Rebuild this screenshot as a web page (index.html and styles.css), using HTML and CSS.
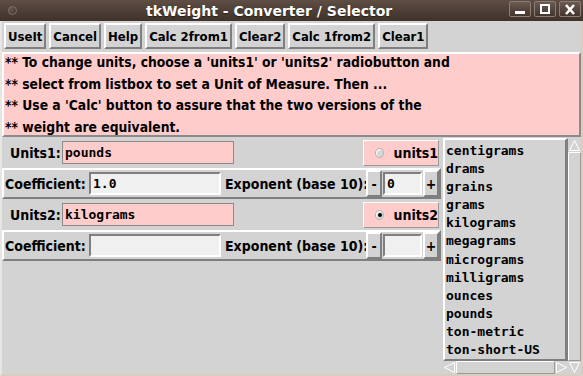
FILE: index.html
```html
<!doctype html>
<html lang="en">
<head>
	<meta charset="utf-8">
	<title>tkWeight - Converter / Selector</title>
	<link rel="stylesheet" href="styles.css">
</head>
<body>
	<div class="window">
		<div class="titlebar">
			<span class="knob"></span>
			<span class="title">tkWeight - Converter / Selector</span>
			<span class="wm">
				<span class="wmbtn"><svg width="14" height="11" viewBox="0 0 14 11"><rect x="2" y="7" width="10" height="3" fill="#fff"/></svg></span>
				<span class="wmbtn"><svg width="14" height="11" viewBox="0 0 14 11"><rect x="3" y="1" width="8" height="8" fill="none" stroke="#fff" stroke-width="2"/></svg></span>
				<span class="wmbtn"><svg width="14" height="11" viewBox="0 0 14 11"><path d="M3 1 L11 10 M11 1 L3 10" stroke="#fff" stroke-width="2.6"/></svg></span>
			</span>
		</div>

		<div class="body">
			<div class="toolbar">
				<button class="tkbtn">UseIt</button>
				<button class="tkbtn">Cancel</button>
				<button class="tkbtn">Help</button>
				<button class="tkbtn">Calc 2from1</button>
				<button class="tkbtn">Clear2</button>
				<button class="tkbtn">Calc 1from2</button>
				<button class="tkbtn">Clear1</button>
			</div>

			<div class="msg">
				<p>** To change units, choose a 'units1' or 'units2' radiobutton and</p>
				<p>** select from listbox to set a Unit of Measure. Then ...</p>
				<p>** Use a 'Calc' button to assure that the two versions of the</p>
				<p>** weight are equivalent.</p>
			</div>

			<div class="main">
				<div class="fields">
					<div class="row units">
						<span class="lbl ulbl">Units1:</span>
						<span class="entry pink">pounds</span>
						<span class="spacer"></span>
						<span class="radio"><span class="dot"></span>units1</span>
					</div>
					<div class="row coef">
						<span class="lbl clbl">Coefficient:</span>
						<span class="entry grey coefval">1.0</span>
						<span class="lbl elbl">Exponent (base 10):</span>
						<span class="small">-</span>
						<span class="entry grey expval">0</span>
						<span class="small">+</span>
					</div>
					<div class="row units">
						<span class="lbl ulbl">Units2:</span>
						<span class="entry pink">kilograms</span>
						<span class="spacer"></span>
						<span class="radio"><span class="dot on"></span>units2</span>
					</div>
					<div class="row coef">
						<span class="lbl clbl">Coefficient:</span>
						<span class="entry grey coefval"></span>
						<span class="lbl elbl">Exponent (base 10):</span>
						<span class="small">-</span>
						<span class="entry grey expval"></span>
						<span class="small">+</span>
					</div>
				</div>

				<div class="listarea">
					<ul class="listbox">
						<li>centigrams</li>
						<li>drams</li>
						<li>grains</li>
						<li>grams</li>
						<li>kilograms</li>
						<li>megagrams</li>
						<li>micrograms</li>
						<li>milligrams</li>
						<li>ounces</li>
						<li>pounds</li>
						<li>ton-metric</li>
						<li>ton-short-US</li>
					</ul>
					<div class="vscroll">
						<span class="arrow"><svg width="11" height="11" viewBox="0 0 11 11"><path d="M5.5 0.5 L10.5 10.5 L0.5 10.5 Z" fill="none" stroke="#fff"/></svg></span>
						<span class="trough"></span>
						<span class="arrow"><svg width="11" height="11" viewBox="0 0 11 11"><path d="M5.5 10.5 L0.5 0.5 L10.5 0.5 Z" fill="none" stroke="#fff"/></svg></span>
					</div>
					<div class="hscroll">
						<span class="arrow"><svg width="11" height="11" viewBox="0 0 11 11"><path d="M0.5 5.5 L10.5 0.5 L10.5 10.5 Z" fill="none" stroke="#fff"/></svg></span>
						<span class="thumb"></span>
						<span class="arrow"><svg width="11" height="11" viewBox="0 0 11 11"><path d="M10.5 5.5 L0.5 0.5 L0.5 10.5 Z" fill="none" stroke="#fff"/></svg></span>
					</div>
				</div>
			</div>
		</div>
	</div>
</body>
</html>
```

FILE: styles.css
```css
html, body
{
	margin: 0;
	padding: 0;
	background: #d3d3d3;
}

body
{
	width: 583px;
	height: 376px;
	overflow: hidden;
	font-family: "DejaVu Sans Condensed", "DejaVu Sans", sans-serif;
	font-weight: bold;
	font-size: 14px;
	color: #000;
}

.window
{
	height: 376px;
	display: flex;
	flex-direction: column;
}

/* window manager title bar */
.titlebar
{
	height: 21px;
	flex: none;
	display: flex;
	align-items: center;
	background: linear-gradient(#5e4e44, #3e322b);
	color: #fff;
}

.knob
{
	width: 7px;
	height: 7px;
	margin-left: 8px;
	border-radius: 50%;
	border: 1px solid #85766c;
	background: radial-gradient(circle at 35% 35%, #6a5a50, #3a2e28);
}

.title
{
	margin-left: 129px;
	font-family: "DejaVu Sans", sans-serif;
	font-size: 14px;
	font-weight: bold;
	text-shadow: 0 1px 1px #2a201a;
	white-space: nowrap;
}

.wm
{
	margin-left: auto;
	display: flex;
	gap: 3px;
	margin-right: 2px;
	margin-top: -3px;
}

.wmbtn
{
	width: 20px;
	height: 14px;
	border: 1px solid #8c7c72;
	border-radius: 2px;
	background: linear-gradient(#6a5a50, #43362f);
	display: flex;
	align-items: center;
	justify-content: center;
}

.body
{
	flex: 1;
	min-height: 0;
	display: flex;
	flex-direction: column;
	border-left: 2px solid #e9e5e0;
	border-right: 2px solid #d8cdbf;
	border-bottom: 2px solid #d8cdbf;
	padding-top: 2px;
}

/* button bar */
.toolbar
{
	display: flex;
	flex: none;
	gap: 3px;
	padding-left: 2px;
	height: 26px;
}

.tkbtn
{
	font-family: inherit;
	font-weight: bold;
	font-size: 13px;
	background: #d3d3d3;
	height: 26px;
	padding: 0 2px;
	margin: 0;
	border: 2px solid;
	border-color: #fff #7f7f7f #7f7f7f #fff;
	color: #000;
}

.msg
{
	flex: none;
	background: #ffcccc;
	margin-top: 3px;
	padding: 0 1px;
	border: 2px solid;
	border-color: #fff #8a8a8a #8a8a8a #fff;
	height: 81px;
	overflow: hidden;
	font-size: 13.75px;
}

.msg p
{
	margin: 0;
	line-height: 21.5px;
	white-space: nowrap;
}

.msg p:first-child
{
	margin-top: -2px;
}

/* lower part */
.main
{
	flex: 1;
	min-height: 0;
	display: flex;
}

.fields
{
	width: 439px;
	flex: none;
	display: flex;
	flex-direction: column;
}

.row
{
	display: flex;
	align-items: center;
	height: 27px;
	border: 2px solid;
}

.row.units
{
	border-color: #d3d3d3;
	padding-left: 6px;
}

.row.coef
{
	border-color: #fff #7f7f7f #7f7f7f #fff;
	padding-left: 1px;
}

.lbl
{
	white-space: nowrap;
	flex: none;
}

.ulbl
{
	width: 52px;
}

.clbl
{
	width: 84px;
}

.elbl
{
	width: 141px;
}

.entry
{
	box-sizing: border-box;
	height: 23px;
	line-height: 19px;
	border: 2px solid;
	border-color: #7f7f7f #fff #fff #7f7f7f;
	padding: 0 2px;
	font-family: "DejaVu Sans Mono", monospace;
	font-size: 13px;
}

.pink
{
	background: #ffcccc;
	border: 1px solid #8a8a8a;
	line-height: 21px;
	width: 172px;
}

.grey
{
	background: #f0f0f0;
}

.coefval
{
	width: 132px;
	margin-right: 4px;
}

.spacer
{
	flex: 1;
}

.radio
{
	box-sizing: border-box;
	display: flex;
	align-items: center;
	gap: 9px;
	height: 26px;
	width: 76px;
	padding-left: 11px;
	background: #ffcccc;
	border: 1px solid #fff;
	border-right-color: #9a9a9a;
	border-bottom-color: #9a9a9a;
}

.dot
{
	width: 8px;
	height: 8px;
	border-radius: 50%;
	background: #d6d6d6;
	border: 1px solid #b4b4b4;
	box-shadow: inset 1px 1px 1px #fff;
	position: relative;
}

.dot.on::after
{
	content: "";
	position: absolute;
	left: 2px;
	top: 2px;
	width: 4px;
	height: 4px;
	border-radius: 50%;
	background: #000;
}

.small
{
	box-sizing: border-box;
	width: 16px;
	align-self: stretch;
	display: flex;
	align-items: center;
	justify-content: center;
	border: 2px solid;
	border-color: #fff #7f7f7f #7f7f7f #fff;
}

.expval
{
	width: 39px;
	margin: 0 1px;
}

/* listbox with scrollbars */
.listarea
{
	flex: 1;
	min-width: 0;
	margin-left: 2px;
	display: grid;
	grid-template-columns: minmax(0, 1fr) 13px;
	grid-template-rows: minmax(0, 1fr) 13px;
}

.listbox
{
	grid-column: 1;
	grid-row: 1;
	margin: 1px 0 0 0;
	padding: 2px 0 0 1px;
	list-style: none;
	border: 2px solid;
	border-color: #fff #7f7f7f #7f7f7f #fff;
	border-right-width: 3px;
	font-family: "DejaVu Sans Mono", monospace;
	font-size: 13px;
	font-weight: bold;
	line-height: 18.1px;
	overflow: hidden;
}

.vscroll
{
	grid-column: 2;
	grid-row: 1 / 3;
	display: flex;
	flex-direction: column;
	padding-top: 2px;
}

.arrow
{
	width: 13px;
	height: 13px;
	flex: none;
	display: flex;
	align-items: center;
	justify-content: center;
}

.trough
{
	flex: 1;
	border: 1px solid #fff;
	border-right-color: #9a9a9a;
	border-bottom-color: #9a9a9a;
}

.hscroll
{
	grid-column: 1;
	grid-row: 2;
	display: flex;
}

.thumb
{
	flex: 1;
	border: 1px solid #fff;
	border-bottom-color: #9a9a9a;
	border-right-color: #9a9a9a;
}
```
